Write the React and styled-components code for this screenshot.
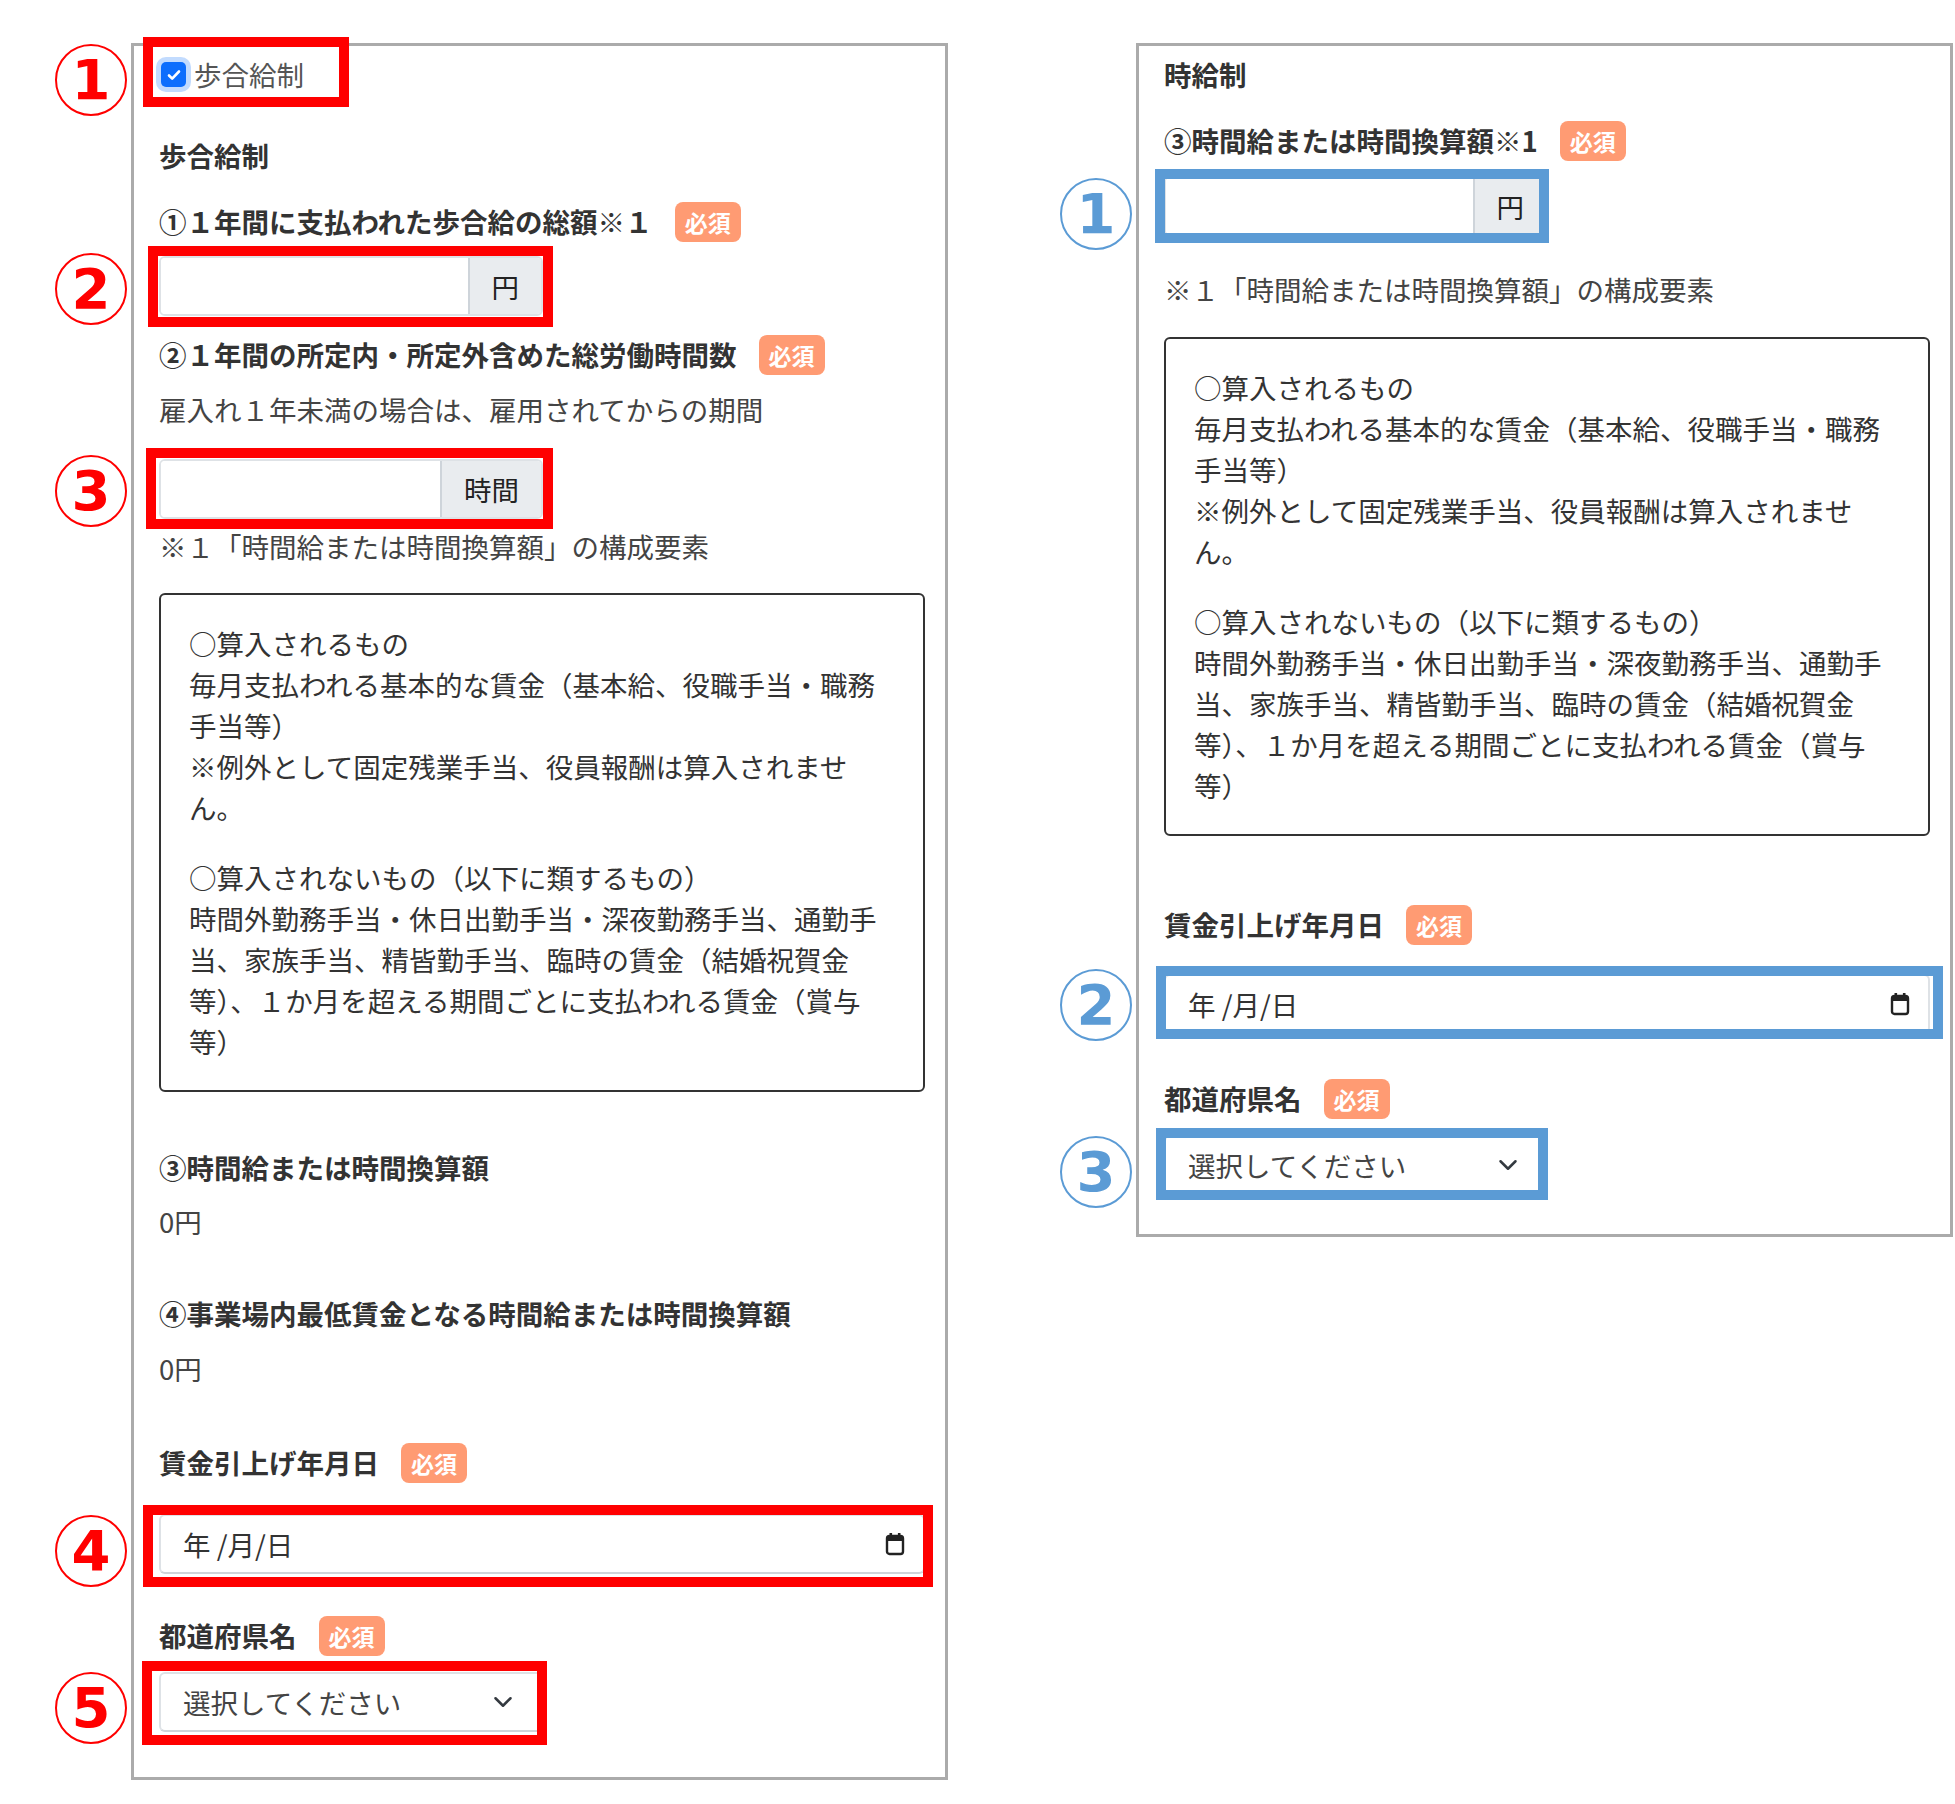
import React from "react";
import styled, { createGlobalStyle } from "styled-components";

const RED = "#ff0000";
const BLUE = "#5b9bd5";

const GlobalStyle = createGlobalStyle`
  body {
    margin: 0;
    background: #fff;
    font-family: "Noto Sans CJK JP", "Noto Sans", sans-serif;
    color: #333;
  }
`;

const Page = styled.div`
  display: flex;
  align-items: flex-start;
  gap: 188px;
  padding: 43px 0 0 131px;
`;

const Panel = styled.section`
  width: 817px;
  box-sizing: border-box;
  border: 3px solid #ababab;
  padding: ${(p) => p.$pt}px 20px ${(p) => p.$pb}px 25px;
  font-size: 27.5px;
  line-height: 41px;
  display: flex;
  flex-direction: column;
  align-items: flex-start;
`;

const Annotated = styled.div`
  position: relative;
  margin-top: ${(p) => p.$mt || 0}px;
  align-self: ${(p) => (p.$stretch ? "stretch" : "flex-start")};
  &::after {
    content: "";
    position: absolute;
    top: ${(p) => p.$box[0]}px;
    right: ${(p) => p.$box[1]}px;
    bottom: ${(p) => p.$box[2]}px;
    left: ${(p) => p.$box[3]}px;
    border: 10px solid ${(p) => p.$color};
    pointer-events: none;
  }
`;

const Marker = styled.span`
  position: absolute;
  left: ${(p) => p.$x}px;
  top: ${(p) => p.$y}px;
  width: 72px;
  height: 72px;
  box-sizing: border-box;
  border: 2px solid ${(p) => p.$color};
  border-radius: 50%;
  color: ${(p) => p.$color};
  font-family: "DejaVu Sans", sans-serif;
  font-weight: 700;
  font-size: 56px;
  line-height: 68px;
  text-align: center;
`;

const CheckRow = styled.label`
  display: flex;
  align-items: center;
  gap: 8px;
  color: #555;
  padding-left: 2px;
`;

const CheckBox = styled.span`
  width: 25px;
  height: 25px;
  border-radius: 5px;
  background: #0d6efd;
  box-shadow: 0 0 0 5px rgba(13, 110, 253, 0.25);
  display: flex;
  align-items: center;
  justify-content: center;
`;

const Title = styled.div`
  font-weight: 700;
  color: #333;
  margin-top: ${(p) => p.$mt || 0}px;
`;

const Label = styled.div`
  display: flex;
  align-items: center;
  gap: 22px;
  font-weight: 700;
  color: #333;
  margin-top: ${(p) => p.$mt || 0}px;
`;

const Badge = styled.span`
  height: 40px;
  padding: 0 10px;
  border-radius: 8px;
  background: #ff9b73;
  color: #fff;
  font-size: 23px;
  line-height: 40px;
  font-weight: 700;
`;

const Text = styled.div`
  color: #444;
  margin-top: ${(p) => p.$mt || 0}px;
`;

const InputGroup = styled.div`
  display: flex;
  width: 384px;
  height: 60px;
  box-sizing: border-box;
  border: 2px solid #dee2e6;
  border-radius: 6px;
  overflow: hidden;
`;

const TextInput = styled.input`
  flex: 1;
  min-width: 0;
  border: none;
  outline: none;
  background: #fff;
  font: inherit;
`;

const Addon = styled.span`
  display: flex;
  align-items: center;
  padding: 0 22px;
  background: #e9ecef;
  border-left: 2px solid #ced4da;
  color: #222;
`;

const Field = styled.div`
  display: flex;
  align-items: center;
  justify-content: space-between;
  width: ${(p) => (p.$full ? "100%" : "384px")};
  height: 60px;
  box-sizing: border-box;
  padding: 0 ${(p) => (p.$full ? 18 : 28)}px 0 22px;
  border: 2px solid #dee2e6;
  border-bottom-color: #cfd4d9;
  border-radius: 6px;
  background: #fff;
  color: ${(p) => (p.$full ? "#333" : "#444")};
`;

const InfoBox = styled.div`
  align-self: stretch;
  margin-top: ${(p) => p.$mt || 0}px;
  border: 2px solid #333;
  border-radius: 6px;
  padding: 28px;
  color: #333;
`;

const InfoPara = styled.p`
  margin: 0;
  & + & {
    margin-top: 29px;
  }
`;

const Check = () => (
  <svg width="16" height="14" viewBox="0 0 16 14">
    <path d="M3 7.5l3.2 3.2L13 3.5" fill="none" stroke="#fff" strokeWidth="2.6" strokeLinecap="round" strokeLinejoin="round" />
  </svg>
);

const CalendarIcon = () => (
  <svg width="20" height="24" viewBox="0 0 20 24">
    <rect x="2" y="4" width="16" height="18" rx="2.5" fill="none" stroke="#222" strokeWidth="2.4" />
    <rect x="2" y="4" width="16" height="5" fill="#222" />
    <rect x="4.5" y="1" width="2.6" height="4" fill="#222" />
    <rect x="12.9" y="1" width="2.6" height="4" fill="#222" />
  </svg>
);

const Chevron = () => (
  <svg width="20" height="20" viewBox="0 0 16 16">
    <path d="M2 5l6 6 6-6" fill="none" stroke="#343a40" strokeWidth="2" strokeLinecap="round" strokeLinejoin="round" />
  </svg>
);

function Required({ children, $mt }) {
  return (
    <Label $mt={$mt}>
      {children}
      <Badge>必須</Badge>
    </Label>
  );
}

function Composition({ $mt }) {
  return (
    <InfoBox $mt={$mt}>
      <InfoPara>
        ○算入されるもの
        <br />
        毎月支払われる基本的な賃金（基本給、役職手当・職務手当等）
        <br />
        ※例外として固定残業手当、役員報酬は算入されません。
      </InfoPara>
      <InfoPara>
        ○算入されないもの（以下に類するもの）
        <br />
        時間外勤務手当・休日出勤手当・深夜勤務手当、通勤手当、家族手当、精皆勤手当、臨時の賃金（結婚祝賀金等）、１か月を超える期間ごとに支払われる賃金（賞与等）
      </InfoPara>
    </InfoBox>
  );
}

function Note({ $mt }) {
  return <Text $mt={$mt}>※１「時間給または時間換算額」の構成要素</Text>;
}

function DateField() {
  return (
    <Field $full>
      <span>年 /月/日</span>
      <CalendarIcon />
    </Field>
  );
}

function PrefSelect() {
  return (
    <Field>
      <span>選択してください</span>
      <Chevron />
    </Field>
  );
}

export default function App() {
  return (
    <>
      <GlobalStyle />
      <Page>
        <Panel $pt={8} $pb={45}>
          <Annotated $color={RED} $box={[-17, -45, -12, -16]}>
            <Marker $color={RED} $x={-104} $y={-10}>1</Marker>
            <CheckRow>
              <CheckBox>
                <Check />
              </CheckBox>
              歩合給制
            </CheckRow>
          </Annotated>
          <Title $mt={40}>歩合給制</Title>
          <Required $mt={25}>①１年間に支払われた歩合給の総額※１</Required>
          <Annotated $mt={14} $color={RED} $box={[-10, -10, -11, -11]}>
            <Marker $color={RED} $x={-104} $y={-3}>2</Marker>
            <InputGroup>
              <TextInput readOnly />
              <Addon>円</Addon>
            </InputGroup>
          </Annotated>
          <Required $mt={18}>②１年間の所定内・所定外含めた総労働時間数</Required>
          <Text $mt={14}>雇入れ１年未満の場合は、雇用されてからの期間</Text>
          <Annotated $mt={29} $color={RED} $box={[-11, -10, -10, -13]}>
            <Marker $color={RED} $x={-104} $y={-4}>3</Marker>
            <InputGroup>
              <TextInput readOnly />
              <Addon>時間</Addon>
            </InputGroup>
          </Annotated>
          <Note $mt={7} />
          <Composition $mt={26} />
          <Label $mt={55}>③時間給または時間換算額</Label>
          <Text $mt={13}>0円</Text>
          <Label $mt={51}>④事業場内最低賃金となる時間給または時間換算額</Label>
          <Text $mt={14}>0円</Text>
          <Required $mt={53}>賃金引上げ年月日</Required>
          <Annotated $mt={31} $stretch $color={RED} $box={[-9, -8, -13, -16]}>
            <Marker $color={RED} $x={-104} $y={1}>4</Marker>
            <DateField />
          </Annotated>
          <Required $mt={41}>都道府県名</Required>
          <Annotated $mt={16} $color={RED} $box={[-11, -4, -13, -17]}>
            <Marker $color={RED} $x={-104} $y={0}>5</Marker>
            <PrefSelect />
          </Annotated>
        </Panel>

        <Panel $pt={8} $pb={39}>
          <Title>時給制</Title>
          <Required $mt={25}>③時間給または時間換算額※1</Required>
          <Annotated $mt={15} $color={BLUE} $box={[-7, -1, -7, -9]}>
            <Marker $color={BLUE} $x={-104} $y={2}>1</Marker>
            <InputGroup>
              <TextInput readOnly />
              <Addon>円</Addon>
            </InputGroup>
          </Annotated>
          <Note $mt={33} />
          <Composition $mt={27} />
          <Required $mt={68}>賃金引上げ年月日</Required>
          <Annotated $mt={29} $stretch $color={BLUE} $box={[-8, -13, -5, -8]}>
            <Marker $color={BLUE} $x={-104} $y={-5}>2</Marker>
            <DateField />
          </Annotated>
          <Required $mt={44}>都道府県名</Required>
          <Annotated $mt={16} $color={BLUE} $box={[-7, 0, -5, -8]}>
            <Marker $color={BLUE} $x={-104} $y={1}>3</Marker>
            <PrefSelect />
          </Annotated>
        </Panel>
      </Page>
    </>
  );
}
